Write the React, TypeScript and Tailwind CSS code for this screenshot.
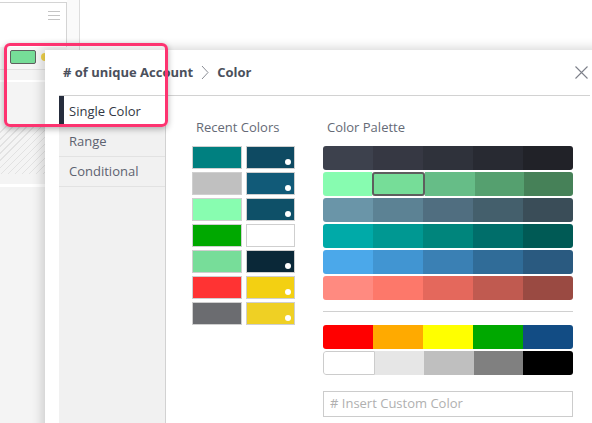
const RECENT: [string, boolean][] = [
  ['#008080', false], ['#0e4a62', true],
  ['#c0c0c0', false], ['#115a78', true],
  ['#88fdb0', false], ['#0e5068', true],
  ['#00a800', false], ['#ffffff', false],
  ['#77dd99', false], ['#0a2838', true],
  ['#ff3333', false], ['#f3d012', true],
  ['#6b6c70', false], ['#efd024', true],
]

const PALETTE = [
  ['#3d414d', '#363843', '#2f323b', '#282a32', '#212228'],
  ['#87fcb0', '#76dd98', '#66bd87', '#55a06f', '#468158'],
  ['#6a95a8', '#5c8294', '#506e80', '#445f6c', '#3a4d58'],
  ['#00aaa8', '#009892', '#00857c', '#006e6a', '#005a55'],
  ['#4ba8ea', '#4195d2', '#3a80b4', '#306c98', '#2a5a80'],
  ['#ff8a80', '#fd786a', '#e4685c', '#c05a50', '#9a4a42'],
]

const BASIC = [
  ['#ff0000', '#ffaa00', '#ffff00', '#00a800', '#124c84'],
  ['#ffffff', '#e6e6e6', '#bfbfbf', '#808080', '#000000'],
]

function PaletteRow({ colors, selected }: { colors: string[]; selected?: number }) {
  return (
    <div className="flex h-[24px] rounded-[3px] overflow-hidden">
      {colors.map((c, i) => (
        <div
          key={i}
          className={
            'flex-1 ' +
            (i === selected ? 'border-2 border-[#5e5e5e] rounded-[3px] ' : '') +
            (c === '#ffffff' ? 'border border-[#cccccc] rounded-l-[3px] ' : '')
          }
          style={{ background: c }}
        />
      ))}
    </div>
  )
}

export default function App() {
  return (
    <div className="relative w-[592px] h-[423px] overflow-hidden bg-white font-['Open_Sans',sans-serif]">
      {/* Page behind the dialog */}
      <div className="flex h-full">
        <div className="w-[67px] flex flex-col">
          <div className="h-[45px] mt-[2px] border-t border-r border-[#d4d4d4] bg-white flex justify-end pr-[6px] pt-[8px]">
            <div className="flex flex-col gap-[3px] w-[12px]">
              <div className="h-px bg-[#c4c4c4]" />
              <div className="h-px bg-[#c4c4c4]" />
              <div className="h-px bg-[#c4c4c4]" />
            </div>
          </div>
          <div className="flex items-center gap-[5px] pl-[10px] pt-[3px] pb-[5px] bg-[#f6f6f6] border-b border-[#e2e2e2]">
            <div className="w-[26px] h-[14px] rounded-[2px] border border-[#5f5f5f] bg-[#76dd98]" />
            <div className="w-[8px] h-[8px] rounded-full bg-[#f0d24a]" />
          </div>
          <div className="flex-1 bg-[#f4f4f4] flex flex-col">
            <div className="h-[10px]" />
            <div className="h-[2px] bg-white" />
            <div className="h-[44px]" />
            <div className="h-[48px] bg-[repeating-linear-gradient(135deg,#f4f4f4_0px,#f4f4f4_4px,#e2e2e2_4px,#e2e2e2_5px)]" />
            <div className="h-[10px]" />
            <div className="h-[3px] bg-white" />
          </div>
        </div>
        <div className="w-[13px] border-r border-[#dddddd] bg-[#fafafa]" />
        <div className="flex-1 bg-white" />
      </div>

      {/* Dialog */}
      <div className="absolute left-[45px] top-[50px] w-[560px] h-[400px] bg-white pl-[14px] shadow-[-3px_-2px_10px_rgba(0,0,0,0.16)] flex flex-col">
        <div className="h-[46px] w-[531px] border-b border-[#d2d2d2] flex items-center pl-[4px] text-[13px] font-bold text-[#4b505c]">
          <span>#&nbsp;of unique Account</span>
          <svg width="8" height="15" viewBox="0 0 8 15" className="mx-[8px]">
            <polyline points="1,1 7,7.5 1,14" fill="none" stroke="#8a8d95" strokeWidth="1" />
          </svg>
          <span>Color</span>
          <svg width="13" height="13" viewBox="0 0 13 13" className="ml-auto mr-[2px]">
            <path d="M0.5 0.5 L12.5 12.5 M12.5 0.5 L0.5 12.5" stroke="#7d808a" strokeWidth="1.1" fill="none" />
          </svg>
        </div>

        <div className="flex flex-1">
          {/* Menu */}
          <div className="w-[107px] bg-[#f1f1f1] border-r border-[#d2d2d2] text-[13px] text-[#5d6270]">
            <div className="h-[31px] flex items-center bg-white border-l-[5px] border-[#262d3d] pl-[5px] text-[#333845]">
              Single Color
            </div>
            <div className="h-[30px] flex items-center pl-[10px] border-b border-[#e2e2e2]">Range</div>
            <div className="h-[30px] flex items-center pl-[10px] border-b border-[#e2e2e2]">Conditional</div>
          </div>

          {/* Recent colors */}
          <div className="ml-[26px] w-[103px] pt-[22px]">
            <div className="pl-[4px] text-[13px] text-[#656a76] leading-[18px] mb-[10px]">Recent Colors</div>
            <div className="grid grid-cols-2 gap-x-[4px] gap-y-[3px]">
              {RECENT.map(([c, dot], i) => (
                <div
                  key={i}
                  className="relative h-[23px] border border-[#cfcfcf]"
                  style={{ background: c }}
                >
                  {dot && <div className="absolute right-[3px] bottom-[3px] w-[6px] h-[6px] rounded-full bg-white" />}
                </div>
              ))}
            </div>
          </div>

          {/* Palette */}
          <div className="ml-[28px] w-[250px] pt-[22px]">
            <div className="pl-[4px] text-[13px] text-[#656a76] leading-[18px] mb-[10px]">Color Palette</div>
            <div className="flex flex-col gap-[2px]">
              {PALETTE.map((row, i) => (
                <PaletteRow key={i} colors={row} selected={i === 1 ? 1 : undefined} />
              ))}
            </div>
            <div className="h-px bg-[#d0d0d0] mt-[11px] mb-[13px]" />
            <div className="flex flex-col gap-[2px]">
              {BASIC.map((row, i) => (
                <PaletteRow key={i} colors={row} />
              ))}
            </div>
            <div className="mt-[16px] h-[26px] border border-[#cccccc] flex items-center pl-[6px] text-[13px] text-[#b0b0b0]">
              # Insert Custom Color
            </div>
          </div>
        </div>
      </div>

      {/* Highlight */}
      <div className="absolute left-[4px] top-[43px] w-[164px] h-[84px] rounded-[6px] border-[3px] border-[#fd3370] shadow-[0_2px_6px_rgba(0,0,0,0.3)]" />
    </div>
  )
}
